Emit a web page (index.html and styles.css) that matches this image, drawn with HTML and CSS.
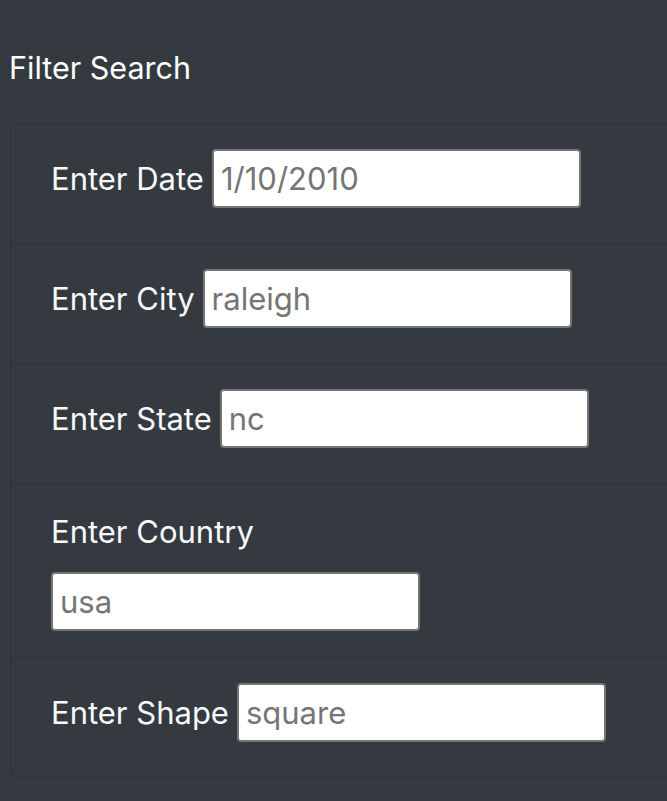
FILE: index.html
```html
<!DOCTYPE html>
<html>
<head>
<meta charset="utf-8">
<link rel="stylesheet" href="styles.css">
</head>
<body>
<div class="page">
  <h4 class="title">Filter Search</h4>
  <ul class="filters">
    <li class="filter inline">
      <label class="label" for="date">Enter Date</label>
      <input class="field" id="date" type="text" placeholder="1/10/2010">
    </li>
    <li class="filter inline">
      <label class="label" for="city">Enter City</label>
      <input class="field" id="city" type="text" placeholder="raleigh">
    </li>
    <li class="filter inline">
      <label class="label" for="state">Enter State</label>
      <input class="field" id="state" type="text" placeholder="nc">
    </li>
    <li class="filter stacked">
      <label class="label" for="country">Enter Country</label>
      <input class="field" id="country" type="text" placeholder="usa">
    </li>
    <li class="filter inline">
      <label class="label" for="shape">Enter Shape</label>
      <input class="field" id="shape" type="text" placeholder="square">
    </li>
  </ul>
</div>
</body>
</html>
```

FILE: styles.css
```css
html, body {
  margin: 0;
  padding: 0;
  background: #343a40;
}
body {
  font-family: Inter, "Noto Sans", sans-serif;
  color: #fff;
  overflow: hidden;
  height: 801px;
}
.page {
  padding: 0 0 0 9px;
  overflow: hidden;
}
.title {
  margin: 0;
  padding-top: 48px;
  font-size: 30.5px;
  font-weight: 400;
  line-height: 40px;
  height: 75px;
}
.filters {
  list-style: none;
  margin: 0 0 0 1px;
  padding: 0;
  width: 690px;
  border: 1px solid #2c3136;
  border-radius: 7px;
}
.filter {
  padding: 25px 0 35px 40px;
  border-top: 1px solid #2c3136;
}
.filter:first-child {
  border-top: none;
}
.inline {
  display: flex;
  align-items: center;
  gap: 8px;
}
.stacked {
  display: flex;
  flex-direction: column;
  align-items: flex-start;
  padding-bottom: 26px;
}
.stacked .label {
  line-height: 40px;
  margin-top: 3px;
  margin-bottom: 20px;
}
.label {
  font-size: 31px;
  font-weight: 400;
  color: #f8f9fa;
}
.field {
  box-sizing: border-box;
  width: 369px;
  height: 59px;
  border: 2px solid #767676;
  border-radius: 4px;
  background: #fff;
  padding: 0 7px;
  font-family: Inter, "Noto Sans", sans-serif;
  font-size: 31px;
  color: #495057;
  margin: 0;
}
.field::placeholder {
  color: #757575;
  opacity: 1;
}
```
